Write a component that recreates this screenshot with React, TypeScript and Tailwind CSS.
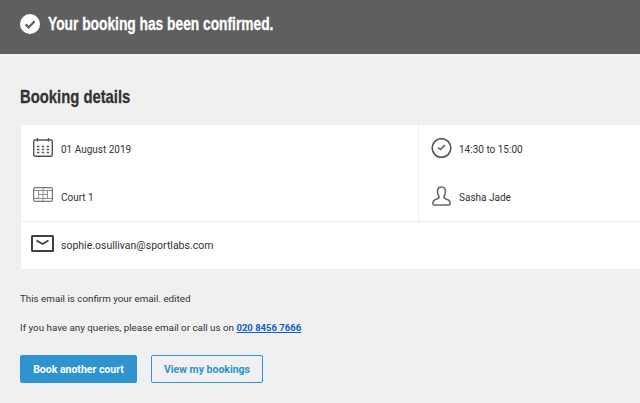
const narrow = { fontFamily: '"Liberation Sans Narrow", "Liberation Sans", sans-serif' };

export default function App() {
  return (
    <div className="w-[640px] h-[403px] overflow-hidden bg-[#f0f0f0] text-[#333]" style={{ fontFamily: 'Roboto, sans-serif' }}>
      <div className="h-[54px] bg-[#5f5f5f] flex items-center pl-5 pb-[6px] gap-2">
        <svg width="20" height="20" viewBox="0 0 20 20">
          <circle cx="10" cy="10" r="10" fill="#fff" />
          <path d="M5.6 10.4 L8.6 13.4 L14.6 7.2" fill="none" stroke="#5f5f5f" strokeWidth="2.2" />
        </svg>
        <span className="text-white font-bold text-[18px] leading-none origin-left scale-x-[0.765] whitespace-nowrap [-webkit-text-stroke:0.3px_#fff]" style={narrow}>
          Your booking has been confirmed.
        </span>
      </div>
      <div className="pl-5 pt-[32px]">
        <h1 className="text-[19px] leading-[22px] font-bold text-[#333] origin-left scale-x-[0.78] whitespace-nowrap [-webkit-text-stroke:0.3px_#333]" style={narrow}>
          Booking details
        </h1>
        <div className="mt-[17px] bg-white border-l border-b border-[#eeeeee] text-[10px] text-[#333]">
          <div className="flex h-[97px] border-b border-[#eeeeee]">
            <div className="w-[398px] border-r border-[#eeeeee] flex flex-col">
              <Row icon={<CalendarIcon />} text="01 August 2019" pos="mb-[3px]" />
              <Row icon={<CourtIcon />} text="Court 1" pos="mb-[5px]" />
            </div>
            <div className="flex-1 flex flex-col">
              <Row icon={<ClockIcon />} text="14:30 to 15:00" pos="mb-[3px]" />
              <Row icon={<UserIcon />} text="Sasha Jade" pos="mb-[3px] ml-[1px]" />
            </div>
          </div>
          <div className="h-[47px] flex items-center pl-[12px] text-[10.5px]">
            <div className="w-[28px] shrink-0">
              <div className="w-fit mb-[5px] -ml-[2px]"><MailIcon /></div>
            </div>
            sophie.osullivan@sportlabs.com
          </div>
        </div>
        <p className="mt-[22px] text-[9.8px] leading-[14px]">This email is confirm your email. edited</p>
        <p className="mt-[15px] text-[9.8px] leading-[14px]">
          If you have any queries, please email or call us on{" "}
          <a className="font-bold text-[#0b5fc4] underline text-[9.5px]">020 8456 7666</a>
        </p>
        <div className="mt-[20px] flex gap-[14px]">
          <button className="w-[117px] h-[28px] pt-[1px] rounded-[2px] bg-[#2e93cf] text-white text-[10.5px] font-bold">Book another court</button>
          <button className="w-[112px] h-[28px] pt-[1px] rounded-[2px] border border-[#2e93cf] text-[#2e93cf] text-[10.5px] font-bold">View my bookings</button>
        </div>
      </div>
    </div>
  );
}

function Row({ icon, text, pos }: { icon: React.ReactNode; text: string; pos: string }) {
  return (
    <div className="h-[48px] flex items-center pl-[12px]">
      <div className="w-[28px] shrink-0">
        <div className={`w-fit ${pos}`}>{icon}</div>
      </div>
      {text}
    </div>
  );
}

function CalendarIcon() {
  return (
    <svg width="20" height="19" viewBox="0 0 20 19" fill="none" stroke="#555" className="block">
      <rect x="0.7" y="2" width="18.6" height="16.3" rx="1.5" strokeWidth="1.4" />
      <path d="M4.5 0V3.5M15.5 0V3.5" strokeWidth="1.4" />
      <path d="M4 8.5h2.4M8.8 8.5h2.4M13.6 8.5h2.4M4 11.5h2.4M8.8 11.5h2.4M13.6 11.5h2.4M4 14.5h2.4M8.8 14.5h2.4M13.6 14.5h2.4" strokeWidth="1.6" />
    </svg>
  );
}
function CourtIcon() {
  return (
    <svg width="20" height="15" viewBox="0 0 20 15" fill="none" stroke="#777" strokeWidth="1" className="block">
      <rect x="0.6" y="0.6" width="18.8" height="13.8" rx="1.5" strokeWidth="1.2" />
      <path d="M0.5 3.5H19.5M0.5 11.5H19.5M5.5 3.5V11.5M14.5 3.5V11.5M5.5 7.5H14.5M10 0.5V14.5" strokeWidth="0.8" />
    </svg>
  );
}
function ClockIcon() {
  return (
    <svg width="21" height="20" viewBox="0 0 21 20" fill="none" stroke="#555" className="block">
      <circle cx="10.5" cy="10" r="9.3" strokeWidth="1.6" />
      <path d="M7 9.5L9.5 11.5L14 7" strokeWidth="1.5" />
    </svg>
  );
}
function UserIcon() {
  return (
    <svg width="19" height="20" viewBox="0 0 19 20" fill="none" stroke="#666" strokeWidth="1.6" className="block">
      <path d="M9.5 1C6.8 1 5.5 3 5.5 5.5C5.5 8 6.5 9.5 7 10.5C7.2 11.8 6.5 12.5 5 13C3 13.6 1 14.2 1 16.5V18C1 18.8 1.2 19 2 19H17C17.8 19 18 18.8 18 18V16.5C18 14.2 16 13.6 14 13C12.5 12.5 11.8 11.8 12 10.5C12.5 9.5 13.5 8 13.5 5.5C13.5 3 12.2 1 9.5 1Z" />
    </svg>
  );
}
function MailIcon() {
  return (
    <svg width="23" height="17" viewBox="0 0 23 17" fill="none" stroke="#3c4148" className="block">
      <rect x="1" y="1" width="21" height="15" rx="0.5" strokeWidth="2" />
      <path d="M5.5 5.5L11.5 9L17.5 5.5" strokeWidth="1.8" />
    </svg>
  );
}
